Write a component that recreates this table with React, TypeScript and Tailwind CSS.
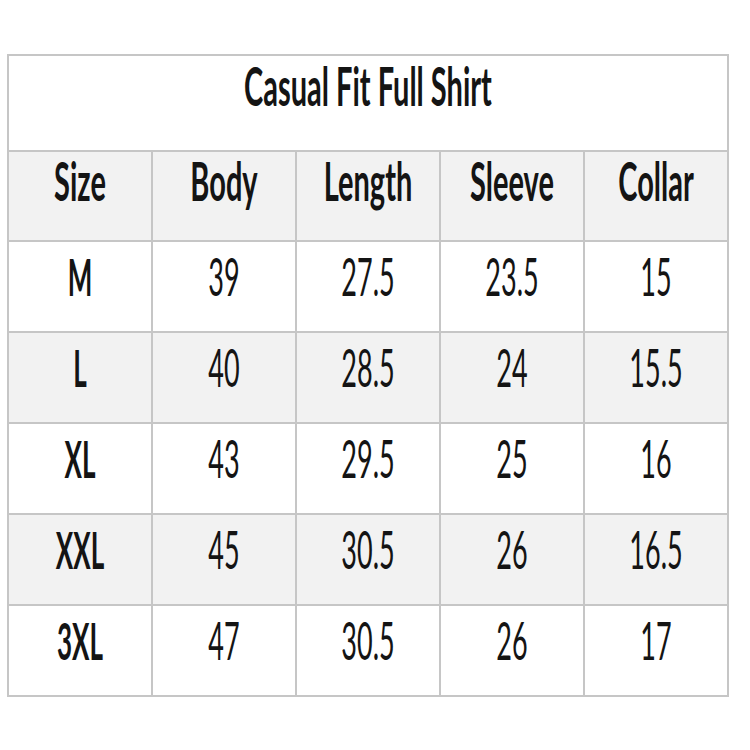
import React from 'react';

const headers = ['Size', 'Body', 'Length', 'Sleeve', 'Collar'];

const rows = [
  ['M', '39', '27.5', '23.5', '15'],
  ['L', '40', '28.5', '24', '15.5'],
  ['XL', '43', '29.5', '25', '16'],
  ['XXL', '45', '30.5', '26', '16.5'],
  ['3XL', '47', '30.5', '26', '17'],
];

// condensed look: regular Lato stretched vertically
function Tall({ children, className }: { children: React.ReactNode; className: string }) {
  return <span className={`inline-block leading-none ${className}`}>{children}</span>;
}

export default function App() {
  return (
    <div
      className="w-[750px] h-[750px] bg-white pt-[54px] pl-[7px]"
      style={{ fontFamily: 'Lato, "Noto Sans", sans-serif' }}
    >
      <table className="w-[722px] border-collapse text-[#141414]">
        <thead>
          <tr className="h-[96px] bg-white">
            <th colSpan={5} className="border-2 border-[#c6c6c6] pb-[34px] text-center align-middle">
              <Tall className="text-[29px] font-bold scale-y-[1.85]">Casual Fit Full Shirt</Tall>
            </th>
          </tr>
          <tr className="h-[90px] bg-[#f2f2f2]">
            {headers.map((h) => (
              <th key={h} className="w-[144px] border-2 border-[#c6c6c6] pb-[30px] text-center align-middle">
                <Tall className="text-[29px] font-bold scale-y-[1.85]">{h}</Tall>
              </th>
            ))}
          </tr>
        </thead>
        <tbody>
          {rows.map((r, i) => (
            <tr key={r[0]} className={`h-[91px] ${i % 2 === 1 ? 'bg-[#f2f2f2]' : 'bg-white'}`}>
              {r.map((c, j) => (
                <td key={j} className="border-2 border-[#c6c6c6] pb-[18px] text-center align-middle">
                  <Tall
                    className={
                      j === 0
                        ? 'text-[26px] font-bold scale-y-[2]'
                        : 'text-[27px] font-normal scale-y-[1.9]'
                    }
                  >
                    {c}
                  </Tall>
                </td>
              ))}
            </tr>
          ))}
        </tbody>
      </table>
    </div>
  );
}
